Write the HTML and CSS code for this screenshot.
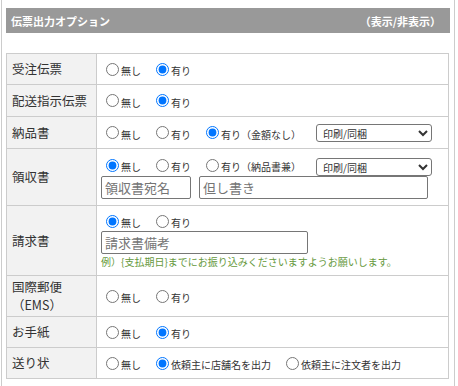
FILE: index.html
```
<!DOCTYPE html>
<html>
<head>
    <title>伝票出力オプション</title>
    <link rel="stylesheet" href="styles.css">
</head>
<body>
    <div class="panel">
        <div class="panel-head">
            <span>伝票出力オプション</span>
            <span>（表示/非表示）</span>
        </div>
        <table class="opts">
            <colgroup>
                <col class="col-label">
                <col>
            </colgroup>
            <tr>
                <th>受注伝票</th>
                <td>
                    <div class="line">
                        <label class="opt"><input type="radio" name="juchu"><span>無し</span></label>
                        <label class="opt"><input type="radio" name="juchu" checked><span>有り</span></label>
                    </div>
                </td>
            </tr>
            <tr class="tall">
                <th>配送指示伝票</th>
                <td>
                    <div class="line">
                        <label class="opt"><input type="radio" name="haiso"><span>無し</span></label>
                        <label class="opt"><input type="radio" name="haiso" checked><span>有り</span></label>
                    </div>
                </td>
            </tr>
            <tr class="tall">
                <th>納品書</th>
                <td>
                    <div class="line">
                        <label class="opt"><input type="radio" name="nohin"><span>無し</span></label>
                        <label class="opt"><input type="radio" name="nohin"><span>有り</span></label>
                        <label class="opt"><input type="radio" name="nohin" checked><span>有り（金額なし）</span></label>
                        <select class="sel">
                            <option>印刷/同梱</option>
                        </select>
                    </div>
                </td>
            </tr>
            <tr>
                <th>領収書</th>
                <td>
                    <div class="line line-sel">
                        <label class="opt"><input type="radio" name="ryoshu" checked><span>無し</span></label>
                        <label class="opt"><input type="radio" name="ryoshu"><span>有り</span></label>
                        <label class="opt"><input type="radio" name="ryoshu"><span>有り（納品書兼）</span></label>
                        <select class="sel">
                            <option>印刷/同梱</option>
                        </select>
                    </div>
                    <div class="fields">
                        <input type="text" class="txt txt-atena" placeholder="領収書宛名">
                        <input type="text" class="txt txt-tadashi" placeholder="但し書き">
                    </div>
                </td>
            </tr>
            <tr>
                <th>請求書</th>
                <td>
                    <div class="line">
                        <label class="opt"><input type="radio" name="seikyu" checked><span>無し</span></label>
                        <label class="opt"><input type="radio" name="seikyu"><span>有り</span></label>
                    </div>
                    <div class="fields">
                        <input type="text" class="txt txt-biko" placeholder="請求書備考">
                    </div>
                    <div class="note">例）{支払期日}までにお振り込みくださいますようお願いします。</div>
                </td>
            </tr>
            <tr>
                <th class="two-line">国際郵便<br>（EMS）</th>
                <td>
                    <div class="line">
                        <label class="opt"><input type="radio" name="ems"><span>無し</span></label>
                        <label class="opt"><input type="radio" name="ems"><span>有り</span></label>
                    </div>
                </td>
            </tr>
            <tr>
                <th>お手紙</th>
                <td>
                    <div class="line">
                        <label class="opt"><input type="radio" name="tegami"><span>無し</span></label>
                        <label class="opt"><input type="radio" name="tegami" checked><span>有り</span></label>
                    </div>
                </td>
            </tr>
            <tr>
                <th>送り状</th>
                <td>
                    <div class="line">
                        <label class="opt"><input type="radio" name="okuri"><span>無し</span></label>
                        <label class="opt"><input type="radio" name="okuri" checked><span>依頼主に店舗名を出力</span></label>
                        <label class="opt"><input type="radio" name="okuri"><span>依頼主に注文者を出力</span></label>
                    </div>
                </td>
            </tr>
        </table>
    </div>
</body>
</html>
```

FILE: styles.css
```
body {
    margin: 0;
    font-family: "Noto Sans CJK JP", "Noto Sans", sans-serif;
    color: #333;
    background-color: #fff;
}

.panel {
    margin-left: 1px;
    width: 454px;
    height: 386px;
    box-sizing: border-box;
    border-left: 1px solid #ccc;
    border-right: 1px solid #ccc;
    padding: 8px 4px 0 4px;
}

.panel-head {
    display: flex;
    justify-content: space-between;
    align-items: center;
    height: 25px;
    padding: 0 9px 0 5px;
    background-color: #999;
    color: #fff;
    font-size: 11px;
    font-weight: bold;
}

.opts {
    margin-top: 20px;
    width: 443px;
    border-collapse: collapse;
    table-layout: fixed;
}

.col-label {
    width: 90px;
}

.opts th,
.opts td {
    border: 1px solid #ccc;
    vertical-align: middle;
}

.opts th {
    background-color: #f2f2f2;
    text-align: left;
    font-weight: normal;
    font-size: 12.5px;
    line-height: 16px;
    padding: 4px 5px;
}

.opts th.two-line {
    line-height: 18px;
    padding: 2px 5px;
}

.opts td {
    padding: 5px 4px;
}

.line {
    display: flex;
    align-items: center;
    height: 20px;
}

.tall .line {
    height: 21px;
}

.line-sel {
    height: 22px;
    align-items: flex-end;
}

.line-sel .opt {
    align-self: center;
}

.opt {
    display: flex;
    align-items: center;
    margin-right: 10px;
    font-size: 10px;
    color: #333;
}

.opt input {
    width: 13px;
    height: 13px;
    margin: 0 2px 0 5px;
}

.opt span {
    margin-top: 3px;
}

.sel {
    width: 116px;
    height: 18px;
    margin-left: 5px;
    padding: 0 2px;
    font-family: inherit;
    font-size: 10px;
    color: #333;
    border: 1px solid #767676;
    border-radius: 3px;
    background-color: #fff;
}

.fields {
    display: flex;
    gap: 8px;
    margin-bottom: 1px;
}

.txt {
    height: 23px;
    box-sizing: border-box;
    padding: 0 3px;
    font-family: inherit;
    font-size: 13px;
    border: 1px solid #767676;
    border-radius: 2px;
}

.txt::placeholder {
    color: #757575;
}

.txt-atena {
    width: 90px;
}

.txt-tadashi {
    width: 229px;
}

.txt-biko {
    width: 207px;
}

.note {
    font-size: 10px;
    line-height: 14px;
    color: #66993c;
    margin-bottom: 1px;
}
```
